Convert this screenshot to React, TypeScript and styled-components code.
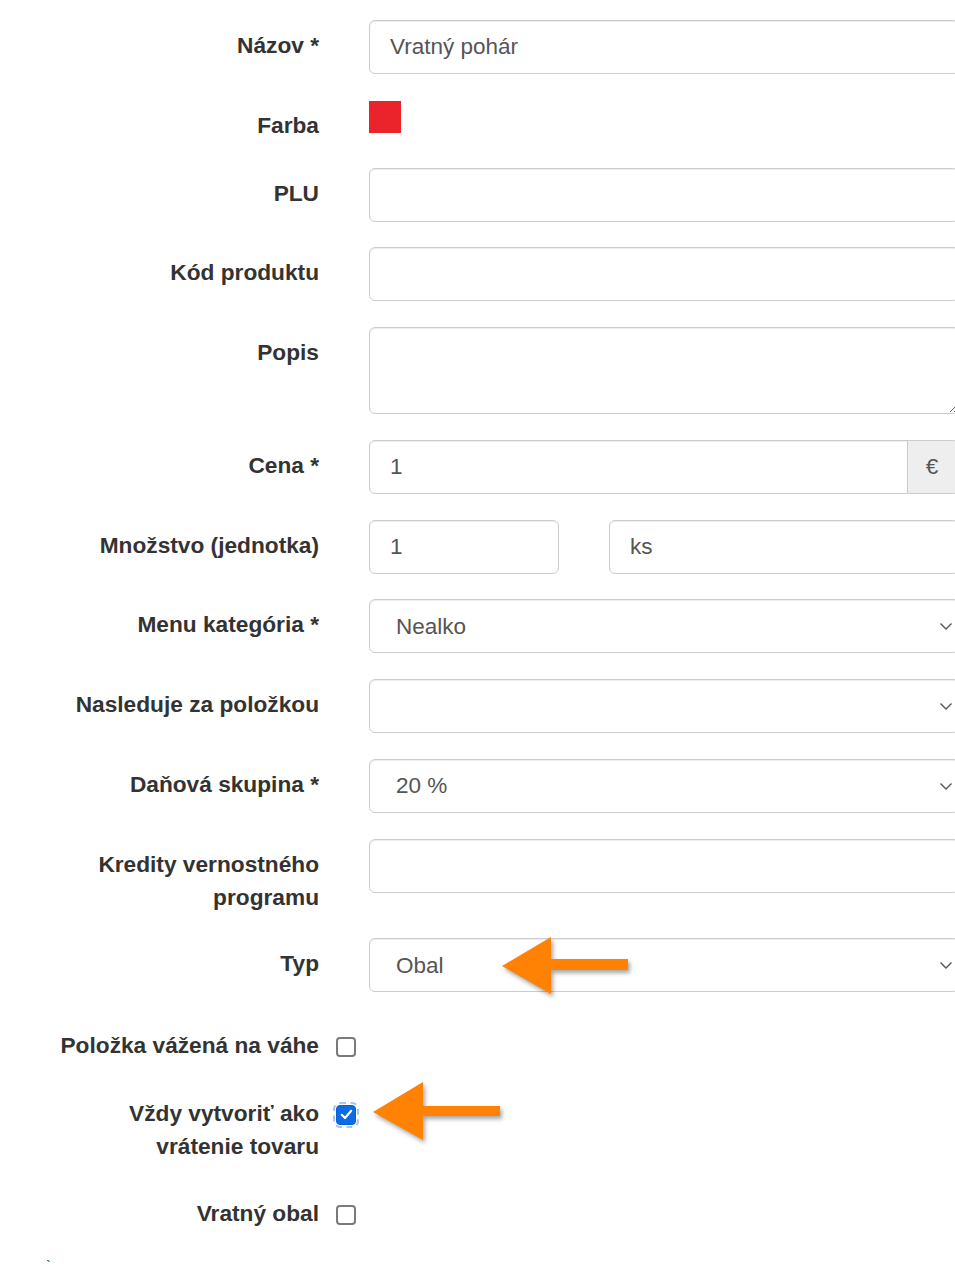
import React from "react";
import styled, { createGlobalStyle } from "styled-components";

const GlobalStyle = createGlobalStyle`
  html, body {
    margin: 0;
    padding: 0;
    background: #ffffff;
    overflow: hidden;
  }
  body {
    font-family: "Liberation Sans", Arial, Helvetica, sans-serif;
    color: #333333;
  }
  * { box-sizing: border-box; }
`;

const Page = styled.div`
  position: relative;
  width: 955px;
  min-height: 1278px;
  padding-top: 20px;
  overflow: hidden;
`;

const FormGroup = styled.div`
  display: grid;
  grid-template-columns: 319px 590px;
  column-gap: 50px;
  align-items: start;
  margin-bottom: 25.75px;
`;

const CheckSection = styled.div`
  padding-top: 2px;
`;

const CheckGroup = styled.div`
  display: grid;
  grid-template-columns: 319px auto;
  column-gap: 17px;
  align-items: start;
  margin-bottom: 25.75px;
`;

const Label = styled.label<{ $lines?: number }>`
  display: block;
  margin: 0;
  padding-top: 9px;
  text-align: right;
  font-weight: 700;
  font-size: 22.7px;
  line-height: 33px;
  color: #333333;
  ${(p) => (p.$lines === 2 ? "height: 74px;" : "")}
`;

const fieldBase = `
  display: block;
  width: 100%;
  height: 54px;
  margin: 0;
  border: 1px solid #cccccc;
  border-radius: 6px;
  background: #ffffff;
  box-shadow: inset 0 1px 1px rgba(0, 0, 0, 0.075);
  font-family: "Liberation Sans", Arial, Helvetica, sans-serif;
  font-size: 22.5px;
  color: #555555;
  outline: none;
`;

const TextInput = styled.input<{ $w?: number }>`
  ${fieldBase}
  padding: 0 20px;
  ${(p) => (p.$w ? `width: ${p.$w}px; flex: none;` : "flex: 1;")}
`;

const GroupInput = styled.input`
  ${fieldBase}
  flex: 1;
  padding: 0 20px;
  border-top-right-radius: 0;
  border-bottom-right-radius: 0;
`;

const TextArea = styled.textarea`
  ${fieldBase}
  height: 87px;
  padding: 12px 20px;
  resize: vertical;
`;

const InputGroup = styled.div`
  display: flex;
  width: 100%;
`;

const Addon = styled.span`
  display: flex;
  align-items: center;
  justify-content: center;
  width: 52px;
  height: 54px;
  background: #eeeeee;
  border: 1px solid #cccccc;
  margin-left: -1px;
  border-top-right-radius: 6px;
  border-bottom-right-radius: 6px;
  font-size: 22.5px;
  color: #555555;
  padding-right: 2px;
`;

const Pair = styled.div`
  display: flex;
  gap: 50px;
  width: 100%;
`;

const SelectWrap = styled.div`
  position: relative;
  width: 100%;
`;

const Select = styled.select`
  ${fieldBase}
  appearance: none;
  -webkit-appearance: none;
  padding: 0 40px 0 26px;
`;

const Chevron = styled.svg`
  position: absolute;
  right: 6px;
  top: 23px;
  width: 14px;
  height: 9px;
  pointer-events: none;
`;

const Swatch = styled.span<{ $color: string }>`
  display: block;
  width: 32px;
  height: 32px;
  margin-top: 1px;
  background: ${(p) => p.$color};
`;

const SwatchCell = styled.div`
  height: 42px;
`;

const Box = styled.span<{ $checked?: boolean }>`
  display: flex;
  align-items: center;
  justify-content: center;
  width: 20px;
  height: 20px;
  margin-top: 17px;
  border-radius: 4px;
  border: ${(p) => (p.$checked ? "1px solid #0a5fd6" : "2px solid #7a7a7a")};
  background: ${(p) => (p.$checked ? "#0b6ce6" : "#ffffff")};
  outline: ${(p) => (p.$checked ? "2px dashed rgba(90, 150, 240, 0.55)" : "none")};
  outline-offset: 1px;
`;

const Stray = styled.p`
  margin: 0;
  padding: 3px 0 0 46px;
  font-size: 15px;
  line-height: 16px;
  color: #333333;
`;

const Arrow = styled.svg`
  position: absolute;
  left: 0;
  top: 0;
  width: 955px;
  height: 1278px;
  pointer-events: none;
  filter: drop-shadow(2px 3px 2px rgba(0, 0, 0, 0.35));
`;

const ChevronIcon = () => (
  <Chevron viewBox="0 0 14 9">
    <path d="M1.5 1.5 L7 7 L12.5 1.5" fill="none" stroke="#555" strokeWidth="1.4" />
  </Chevron>
);

const SelectField = ({ value }: { value: string }) => (
  <SelectWrap>
    <Select defaultValue={value}>
      <option value={value}>{value}</option>
    </Select>
    <ChevronIcon />
  </SelectWrap>
);

const Check = ({ checked }: { checked?: boolean }) => (
  <Box $checked={checked} role="checkbox" aria-checked={!!checked}>
    {checked && (
      <svg width="13" height="11" viewBox="0 0 13 11">
        <path d="M1.8 5.8 L5 9 L11.2 1.8" fill="none" stroke="#fff" strokeWidth="2.2" strokeLinecap="round" strokeLinejoin="round" />
      </svg>
    )}
  </Box>
);

export default function App() {
  return (
    <>
      <GlobalStyle />
      <Page>
        <FormGroup>
          <Label>Názov *</Label>
          <TextInput defaultValue="Vratný pohár" />
        </FormGroup>
        <FormGroup>
          <Label>Farba</Label>
          <SwatchCell>
            <Swatch $color="#ea242a" />
          </SwatchCell>
        </FormGroup>
        <FormGroup>
          <Label>PLU</Label>
          <TextInput defaultValue="" />
        </FormGroup>
        <FormGroup>
          <Label>Kód produktu</Label>
          <TextInput defaultValue="" />
        </FormGroup>
        <FormGroup>
          <Label>Popis</Label>
          <TextArea defaultValue="" />
        </FormGroup>
        <FormGroup>
          <Label>Cena *</Label>
          <InputGroup>
            <GroupInput defaultValue="1" />
            <Addon>€</Addon>
          </InputGroup>
        </FormGroup>
        <FormGroup>
          <Label>Množstvo (jednotka)</Label>
          <Pair>
            <TextInput $w={190} defaultValue="1" />
            <TextInput defaultValue="ks" />
          </Pair>
        </FormGroup>
        <FormGroup>
          <Label>Menu kategória *</Label>
          <SelectField value="Nealko" />
        </FormGroup>
        <FormGroup>
          <Label>Nasleduje za položkou</Label>
          <SelectField value="" />
        </FormGroup>
        <FormGroup>
          <Label>Daňová skupina *</Label>
          <SelectField value="20 %" />
        </FormGroup>
        <FormGroup>
          <Label $lines={2}>
            Kredity vernostného
            <br />
            programu
          </Label>
          <TextInput defaultValue="" />
        </FormGroup>
        <FormGroup>
          <Label>Typ</Label>
          <SelectField value="Obal" />
        </FormGroup>
        <CheckSection>
          <CheckGroup>
            <Label>Položka vážená na váhe</Label>
            <Check />
          </CheckGroup>
          <CheckGroup>
            <Label $lines={2}>
              Vždy vytvoriť ako
              <br />
              vrátenie tovaru
            </Label>
            <Check checked />
          </CheckGroup>
          <CheckGroup>
            <Label>Vratný obal</Label>
            <Check />
          </CheckGroup>
        </CheckSection>
        <Stray>`</Stray>

        <Arrow viewBox="0 0 955 1278">
          <polygon
            fill="#ff8205"
            points="502,966 551,937 551,959 628,959 628,970 551,970 551,994"
          />
          <polygon
            fill="#ff8205"
            points="373,1112 423,1082 423,1106 500,1106 500,1116 423,1116 423,1140"
          />
        </Arrow>
      </Page>
    </>
  );
}
